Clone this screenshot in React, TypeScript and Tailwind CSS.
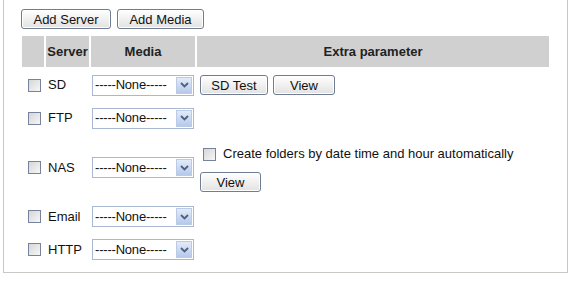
import React from "react";

const font = { fontFamily: '"Liberation Sans", Arial, sans-serif' };

const cols = "grid grid-cols-[22px_43px_104px_352px] gap-x-[2px]";

const Btn = ({ children, w }: { children: React.ReactNode; w: string }) => (
  <button
    type="button"
    className={`${w} h-[20px] rounded-[3px] border border-[#6f7c91] bg-gradient-to-b from-[#ffffff] to-[#e2e2e2] text-[13px] leading-none text-[#111] shadow-[inset_0_0_0_1px_#ffffff]`}
  >
    {children}
  </button>
);

const Check = () => (
  <span className="inline-block h-[13px] w-[13px] border border-[#75849c] bg-gradient-to-br from-[#d6d6d6] to-[#f7f7f7]" />
);

const Select = () => (
  <div className="relative flex h-[21px] w-[102px] items-center border border-[#a8b8d0] bg-white text-[13px] text-[#111]">
    <span className="pl-[2px] tracking-[-0.2px]">-----None-----</span>
    <span className="absolute right-[1px] top-[1px] bottom-[1px] flex w-[16px] items-center justify-center border border-[#b9cbe6] bg-gradient-to-b from-[#e3ebf8] to-[#b6c9ea]">
      <svg width="9" height="6" viewBox="0 0 9 6">
        <path d="M1 1 L4.5 4.5 L8 1" fill="none" stroke="#4d6185" strokeWidth="1.8" />
      </svg>
    </span>
  </div>
);

const SimpleRow = ({ name, h, extra }: { name: string; h: string; extra?: React.ReactNode }) => (
  <div className={`${cols} ${h} items-center`}>
    <div className="flex justify-end pr-[3px]"><Check /></div>
    <div className="pl-[2px]">{name}</div>
    <div className="pl-[1px]"><Select /></div>
    <div className="pl-[3px]">{extra}</div>
  </div>
);

export default function App() {
  return (
    <div className="h-[282px] w-[571px] bg-white" style={font}>
      <div className="ml-[3px] h-[273px] w-[565px] border-x border-b border-[#c8c8c4] pl-[17px] pt-[9px]">
        <div className="flex gap-[6px]">
          <Btn w="w-[90px]">Add Server</Btn>
          <Btn w="w-[87px]">Add Media</Btn>
        </div>

        <div className="ml-[1px] text-[13px] text-[#111]">
          <div className={`${cols} mt-[7px]`}>
            <div className="h-[31px] bg-[#d0d0d0]" />
            <div className="flex h-[31px] items-center justify-center bg-[#d0d0d0] font-bold text-[#222]">Server</div>
            <div className="flex h-[31px] items-center justify-center bg-[#d0d0d0] font-bold text-[#222]">Media</div>
            <div className="flex h-[31px] items-center justify-center bg-[#d0d0d0] font-bold text-[#222]">Extra parameter</div>
          </div>

          <div className="mt-[3px] flex flex-col">
            <SimpleRow
              name="SD"
              h="h-[30px]"
              extra={
                <div className="flex gap-[5px]">
                  <Btn w="w-[68px]">SD Test</Btn>
                  <Btn w="w-[62px]">View</Btn>
                </div>
              }
            />
            <SimpleRow name="FTP" h="h-[36px]" />

            {/* NAS */}
            <div className={`${cols} h-[64px]`}>
              <div className="flex h-[21px] items-center justify-end pr-[3px] mt-[21px]"><Check /></div>
              <div className="flex h-[21px] items-center pl-[2px] mt-[21px]">NAS</div>
              <div className="pl-[1px] mt-[21px]"><Select /></div>
              <div className="flex flex-col items-start pl-[3px] pt-[10px]">
                <label className="flex h-[16px] items-center gap-[7px] pl-[3px]">
                  <Check />
                  <span>Create folders by date time and hour automatically</span>
                </label>
                <div className="mt-[10px]">
                  <Btn w="w-[61px]">View</Btn>
                </div>
              </div>
            </div>

            <SimpleRow name="Email" h="h-[33px]" />
            <SimpleRow name="HTTP" h="h-[33px]" />
          </div>
        </div>
      </div>
    </div>
  );
}
